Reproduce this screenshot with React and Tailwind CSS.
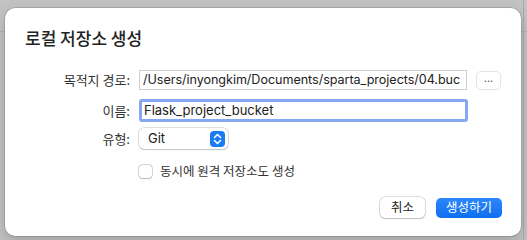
export default function App() {
  const ko = { fontFamily: '"Noto Sans CJK KR", "Noto Sans", sans-serif' };
  const latin = { fontFamily: 'Inter, "Noto Sans CJK KR", sans-serif' };

  return (
    <div className="relative w-[527px] h-[240px] overflow-hidden bg-[#c3c3c3]" style={ko}>
      {/* window behind the sheet */}
      <div className="absolute left-0 right-0 top-[31px] h-px bg-[#b3b3b3]" />
      <div className="absolute top-0 bottom-0 left-[523px] w-px bg-[#aaaaaa]" />

      <div className="absolute left-[5px] top-[8px] w-[516px] h-[228px] rounded-[10px] bg-white shadow-[0_0_0_0.5px_rgba(0,0,0,0.25),0_6px_16px_rgba(0,0,0,0.18)] flex flex-col">
        <h1 className="pl-[20px] pt-[19px] text-[17px] leading-[22px] font-medium text-[#222]">
          로컬 저장소 생성
        </h1>

        <div className="mt-[21px] flex flex-col">
          {/* destination */}
          <div className="flex items-center h-[20px]">
            <label className="w-[132px] text-right pr-[7px] text-[13px] text-[#333]">목적지 경로:</label>
            <div className="ml-[2px] w-[328px] h-[20px] border border-[#cfcfcf] bg-white flex items-center pl-[3px] overflow-hidden whitespace-nowrap text-[12.6px] tracking-[-0.05px] text-[#222]" style={latin}>
              /Users/inyongkim/Documents/sparta_projects/04.buc
            </div>
            <button className="ml-[9px] w-[25px] h-[19px] rounded-[5px] border border-[#e4e4e4] bg-white flex items-center justify-center text-[11px] leading-none text-[#555] pb-[3px]" style={latin}>
              ...
            </button>
          </div>

          {/* name */}
          <div className="mt-[9px] flex items-center h-[23px]">
            <label className="w-[132px] text-right pr-[7px] text-[13px] text-[#333]">이름:</label>
            <div className="ml-[2px] w-[329px] h-[23px] rounded-[3px] border-[3px] border-[#86a8f0] bg-white flex items-center pl-[2px] whitespace-nowrap text-[13px] text-[#222]" style={latin}>
              Flask_project_bucket
            </div>
          </div>

          {/* type */}
          <div className="mt-[6px] flex items-center h-[21px]">
            <label className="w-[132px] text-right pr-[7px] text-[13px] text-[#333]">유형:</label>
            <div className="ml-[2px] w-[89px] h-[21px] rounded-[5px] bg-white shadow-[0_0_0_0.5px_rgba(0,0,0,0.25),0_1px_1.5px_rgba(0,0,0,0.12)] flex items-center justify-between pl-[9px] pr-[3px] text-[13px] text-[#222]" style={latin}>
              <span>Git</span>
              <span className="w-[15px] h-[16px] rounded-[4px] bg-[#1a7cf5] flex items-center justify-center">
                <svg width="9" height="12" viewBox="0 0 9 12" fill="none" stroke="white" strokeWidth="1.6" strokeLinecap="round" strokeLinejoin="round">
                  <path d="M1.5 4.5 L4.5 1.5 L7.5 4.5" />
                  <path d="M1.5 7.5 L4.5 10.5 L7.5 7.5" />
                </svg>
              </span>
            </div>
          </div>

          {/* checkbox */}
          <div className="mt-[13px] flex items-center pl-[134px]">
            <span className="w-[13px] h-[13px] rounded-[3.5px] bg-white shadow-[0_0_0_0.5px_rgba(0,0,0,0.3),0_0.5px_1px_rgba(0,0,0,0.15)]" />
            <span className="ml-[8px] text-[12.5px] text-[#333]">동시에 원격 저장소도 생성</span>
          </div>
        </div>

        {/* buttons */}
        <div className="mt-auto mb-[18px] flex justify-end items-center gap-[11px] pr-[19px]">
          <button className="w-[45px] h-[21px] rounded-[5px] bg-white shadow-[0_0_0_0.5px_rgba(0,0,0,0.25),0_1px_1.5px_rgba(0,0,0,0.15)] text-[12.5px] text-[#222]">
            취소
          </button>
          <button className="w-[66px] h-[20px] rounded-[5px] bg-gradient-to-b from-[#2b87fb] to-[#0e6ff0] text-[12.5px] text-white">
            생성하기
          </button>
        </div>
      </div>
    </div>
  );
}
